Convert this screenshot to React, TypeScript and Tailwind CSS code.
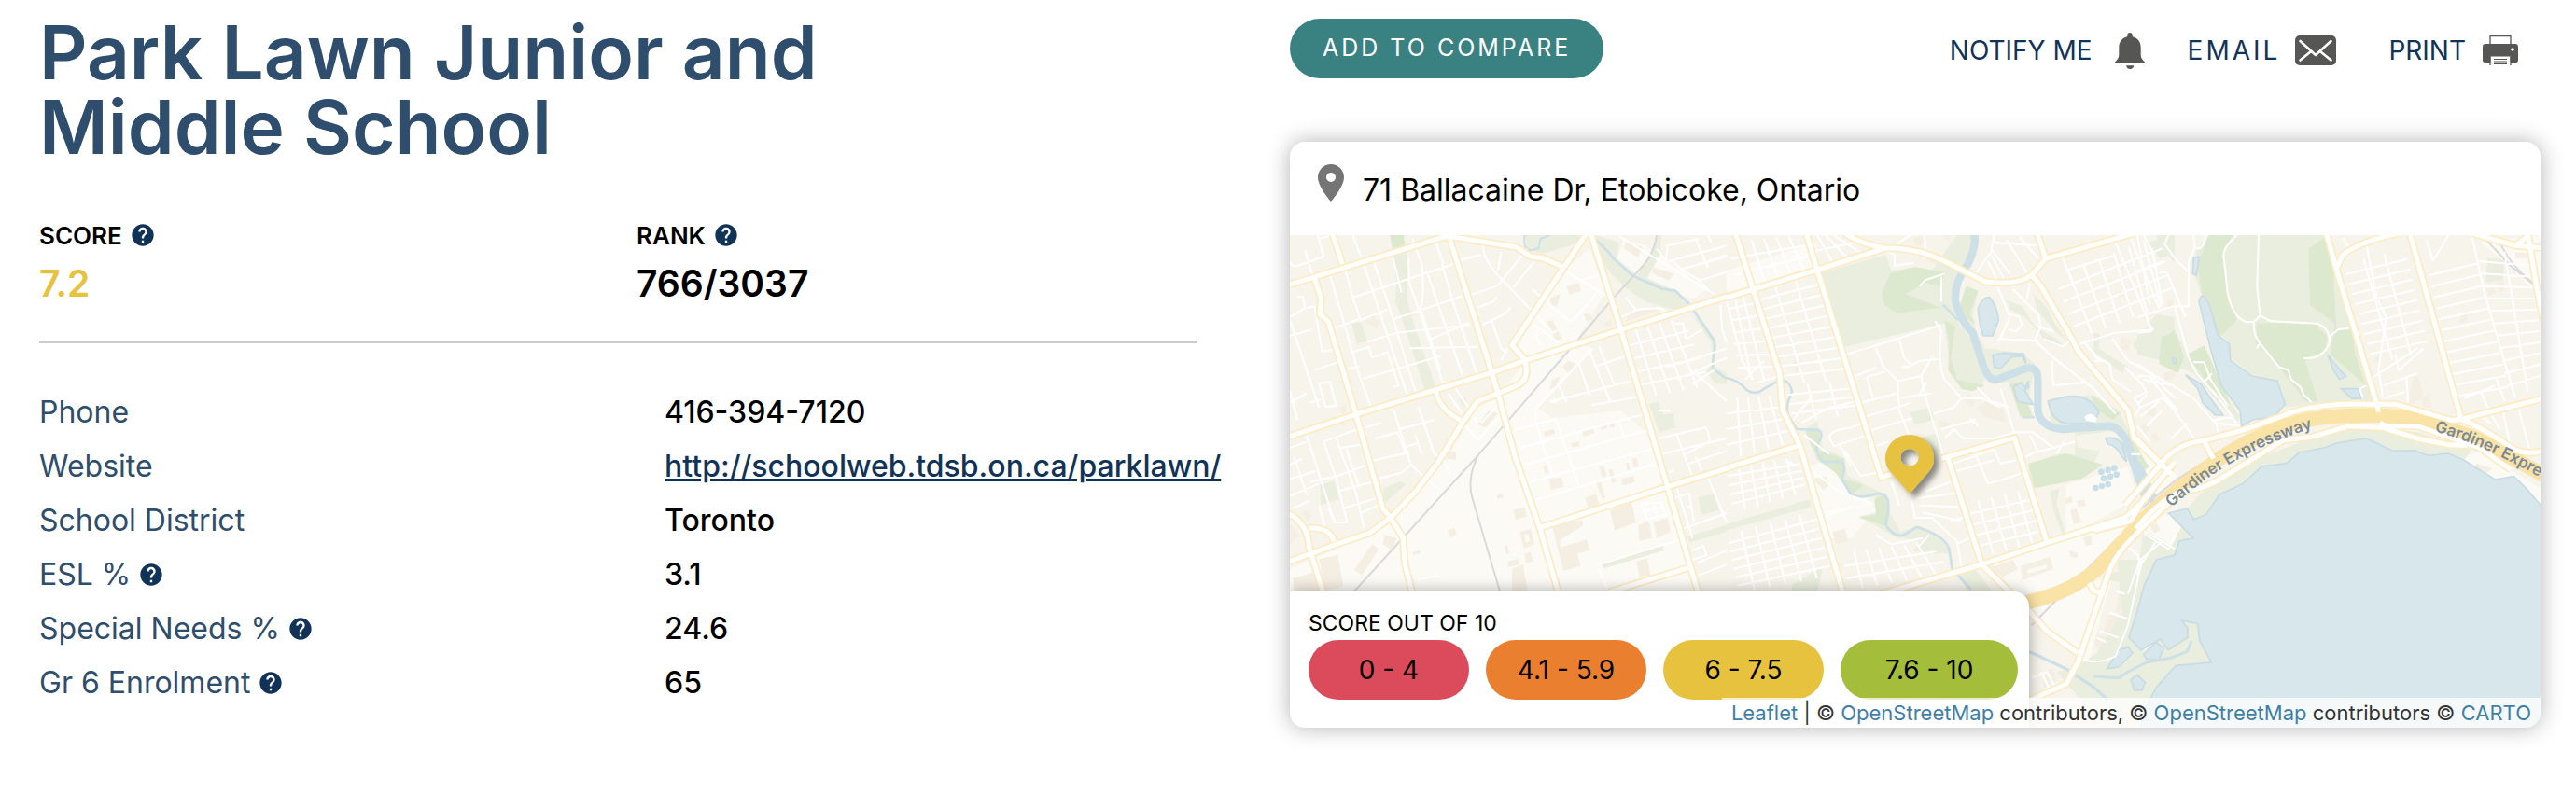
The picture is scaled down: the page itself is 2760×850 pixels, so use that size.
import type { ReactNode } from "react";
import { MdHelp, MdLocationOn } from "react-icons/md";

type Point = [number, number];

type Sheet = {
  origin: string;
  light: string[];
  park: string[];
  wood: string[];
  building: string[];
  water: string[];
  streams: { d: string; width: number }[];
  rail: string[];
  minor: string[];
  major: string[];
};

// Streets of a city block: n lines from a-b to d-c, m lines from a-d to b-c
function block(a: Point, b: Point, c: Point, d: Point, n: number, m: number) {
  const mix = (p: Point, q: Point, t: number) =>
    `${Math.round(p[0] + (q[0] - p[0]) * t)},${Math.round(p[1] + (q[1] - p[1]) * t)}`;
  let path = "";
  for (let i = 1; i <= n; i++) path += `M${mix(a, b, i / (n + 1))} L${mix(d, c, i / (n + 1))}`;
  for (let i = 1; i <= m; i++) path += `M${mix(a, d, i / (m + 1))} L${mix(b, c, i / (m + 1))}`;
  return path;
}

const west: Sheet = {
  origin: "translate(-36 -36)",
  light: [
    "M36,1110 L290,1000 L360,950 L530,770 L640,590 L700,560 L790,450 L960,385 L1010,400 L830,590 L880,625 L1100,600 L1180,670 L1250,850 L1360,1200 L36,1200Z",
    "M920,150 L1000,80 L1050,220 L960,370 L800,430 L770,390Z",
    "M1110,50 L1180,70 L1380,210 L1330,240 L1230,210 L1150,160 L1090,110Z",
  ],
  park: [
    "M358,36 L402,36 L415,120 L412,240 L440,340 L505,525 L470,535 L395,300 L375,250 L378,180Z",
    "M790,36 L985,36 L940,70 L850,95 L800,85Z",
    "M1020,36 L1095,60 L1085,115 L1150,165 L1190,110 L1215,36 L1230,36 L1225,100 L1185,175 L1275,215 L1325,275 L1270,275 L1180,250 L1120,210 L1060,150 L1035,110Z",
    "M1325,285 L1375,335 L1405,390 L1402,460 L1440,480 L1440,515 L1400,510 L1375,475 L1395,440 L1390,380Z",
    "M235,322 L265,315 L283,375 L252,388Z",
    "M133,838 L180,828 L193,885 L137,903Z",
    "M340,850 L390,828 L408,838 L345,893 L330,880Z",
    "M1190,580 L1220,572 L1235,612 L1270,610 L1275,655 L1225,670Z",
    "M1348,880 L1400,866 L1415,920 L1360,935Z",
    "M1315,1005 L1440,968 L1440,990 L1322,1024Z",
    "M1035,1090 L1235,1033 L1238,1050 L1045,1108Z",
  ],
  wood: ["M358,36 L402,36 L405,72 L366,76Z"],
  building: [
    "M1115,55 L1170,75 L1155,108 L1110,80Z",
    "M1205,140 L1270,160 L1255,182 L1200,158Z",
    "M925,200 L965,190 L972,215 L935,228Z",
    "M880,975 L975,950 L980,970 L905,1015 L905,1040 L990,1015 L1000,1050 L960,1060 L970,1100 L915,1115Z",
    "M1065,920 L1135,895 L1148,960 L1080,985Z",
    "M1100,820 L1140,810 L1145,830 L1105,842Z",
    "M985,880 L1020,868 L1032,905 L995,915Z",
    "M755,920 L790,910 L798,940 L762,952Z",
    "M700,872 L720,867 L723,880 L704,884Z",
    "M543,985 L565,977 L573,1000 L550,1008Z",
    "M300,1030 L322,1045 L268,1130 L243,1112Z",
    "M340,1000 L380,1010 L365,1050 L335,1030Z",
    "M130,1078 L190,1065 L208,1165 L150,1180Z",
    "M45,1140 L115,1120 L130,1180 L50,1180Z",
    "M36,965 L65,1000 L36,1035Z",
    "M775,990 L810,980 L822,1030 L788,1045Z M788,1000 L795,1025 L808,1020 L802,996Z",
    "M735,1085 L770,1078 L775,1095 L740,1104Z M790,1060 L810,1055 L818,1085 L795,1090Z",
    "M750,1110 L785,1095 L800,1180 L750,1180Z",
    "M725,1035 L735,1032 L742,1058 L732,1062Z",
    "M870,820 L910,815 L915,845 L875,855Z",
    "M1205,960 L1250,945 L1260,990 L1215,1010Z",
    "M1155,970 L1190,955 L1200,1010 L1160,1020Z",
    "M1150,1085 L1185,1075 L1195,1130 L1160,1135Z",
    "M975,665 L1010,655 L1015,672 L980,685Z M1035,650 L1055,645 L1057,658 L1038,662Z M1065,640 L1078,638 L1080,652 L1067,655Z",
    "M940,705 L965,700 L968,715 L944,718Z M850,668 L885,660 L888,675 L855,685Z",
    "M850,780 L862,776 L868,800 L856,803Z M1030,780 L1045,776 L1055,810 L1040,815Z",
    "M1060,790 L1072,788 L1085,830 L1072,834Z M1020,830 L1035,828 L1050,880 L1040,885Z",
    "M1115,770 L1125,768 L1130,790 L1120,792Z M1135,755 L1150,752 L1158,780 L1142,784Z",
    "M930,440 L955,450 L930,480 L912,460Z M880,500 L905,490 L890,525 L870,530Z",
    "M675,600 L705,610 L665,655 L640,645Z M580,565 L600,555 L610,580 L590,595Z",
    "M545,730 L570,735 L570,760 L540,755Z M430,1055 L455,1048 L455,1060 L433,1065Z",
    "M280,308 L298,310 L296,295 L308,293 L312,308 L330,312 L318,322 L320,338 L306,328 L285,322Z",
    "M195,590 L215,582 L218,605 L205,612Z M75,930 L98,920 L108,940 L92,955Z",
    "M860,315 L880,310 L895,340 L880,345Z M880,355 L900,345 L910,370 L890,375Z M1045,318 L1070,308 L1072,325 L1052,332Z",
    "M980,290 L1000,285 L1008,305 L990,312Z M870,240 L905,225 L895,265 L878,262Z",
    "M1120,290 L1210,262 L1220,280 L1118,312Z",
  ],
  water: [],
  streams: [
    { d: "M790,36 Q785,85 812,85 L835,78 L842,48 L870,36", width: 6 },
    { d: "M1020,52 L1060,90 L1075,110 L1140,168 L1230,208 L1275,215 L1320,258 L1400,375 Q1405,400 1397,420 L1395,465 L1440,498", width: 8 },
  ],
  rail: [
    "M240,1185 L640,745 L960,375 L1065,250 L1175,130 Q1210,85 1215,36",
    "M640,745 Q605,820 622,880 L712,1185",
  ],
  minor: [
    "M125,36 L145,105 L60,135 Q40,138 36,120 M85,85 L110,170 M130,48 L165,38",
    "M165,165 L260,490 L295,585 M215,150 L240,240 L262,305 M262,305 L180,335",
    "M238,36 L270,120 L420,570 M305,120 L360,280 L440,540 M365,100 L395,220",
    "M418,110 L420,190 L470,330 L530,520 M430,48 L460,130 Q470,240 455,270 L465,300 L520,470",
    "M475,150 L595,500 M525,130 L560,250 L640,490 M505,60 L530,130",
    "M240,236 L565,128 M370,306 L590,232 M260,310 L350,275 M285,380 L380,350 M240,412 L290,395 L300,430 L350,412 L385,520 L368,525",
    "M270,498 L520,425 M380,350 L615,325 M420,400 L640,395 M490,370 L610,318 M225,465 L260,458",
    "M60,235 L78,235 L85,270 L36,300 M90,270 L115,265 L140,410 L175,405 M36,360 L105,340 M36,310 L60,380 L130,590 M115,470 L190,445",
    "M130,512 L165,508 L185,585 L150,588 L130,512 M36,535 L60,630 M36,575 L90,545 M100,575 L135,565",
    "M655,60 Q655,120 720,180 L880,350 M570,120 L650,100 M600,235 L700,200 L720,180 L800,80 M635,270 L690,250 L700,235 M655,325 L725,290 L745,270 M755,205 L825,115 M715,90 L705,150",
    "M685,310 L715,400 L735,415 M735,400 L715,440 M815,210 L930,310 Q945,315 955,300 L1020,225 M920,150 L1060,235 M975,180 L1030,165 M815,320 L905,385 M835,340 Q820,380 850,390",
    "M1095,40 L1400,225 M1255,120 L1440,70 M1215,80 L1245,115 L1250,70 L1350,48 M1280,150 L1440,105 M1345,185 L1440,155 M1380,36 L1390,60 M1265,120 L1300,150 L1350,180 L1385,215",
    "M1380,120 L1440,100 M1340,48 L1380,140 M1100,300 L1155,275 L1220,270 L1250,282 M1115,235 L1150,280",
    block([1110, 350], [1300, 300], [1390, 520], [1170, 560], 4, 4),
    "M1440,400 L1250,460 M1440,430 L1280,500 M1340,480 L1440,570 M1330,515 L1400,470 M1270,320 L1300,320 L1310,370 L1360,340 M1420,260 L1425,340 L1440,380",
    "M1010,400 L840,580 Q820,600 825,630 L880,810 M965,450 L1000,550 M1000,410 L1065,570 M1030,395 L1080,520 M880,570 L1150,500 M1005,583 L1165,555 M1015,460 L1130,420 M870,570 L890,575 L885,560",
    "M760,662 L890,628 L965,840 M775,720 L1180,610 M790,775 L1195,660 M805,830 L1205,722 M825,888 L1220,770 M1090,630 L1110,680 M900,520 L925,570",
    "M1220,690 L1370,655 Q1380,655 1385,700 L1300,745 M1230,740 L1440,690 M1255,800 L1270,790 M1280,680 L1310,760 L1330,810 M1320,770 L1440,730 M1340,750 L1360,790 M1220,600 L1260,600",
    "M1165,900 L1230,895 L1245,935 L1185,950 L1165,900 M1205,900 L1218,945 M1170,925 L1240,910 M1275,880 L1320,865 L1335,960 M1280,850 L1330,1010 M1300,980 L1440,930 M1380,815 L1440,960 M1310,910 L1330,910",
    "M1330,1050 L1365,1035 L1375,1065 L1330,1080 M1345,1090 L1440,1050 M1350,1130 L1440,1095 M1030,1110 L1060,1180 M1030,1095 L1290,1015",
    "M36,720 L90,700 M90,680 L180,960 M145,700 L240,665 L330,640 M145,700 L185,820 L220,960 M185,690 L250,870 L275,980 M200,720 L265,710 M215,715 L260,850",
    "M36,775 L75,755 M36,820 L120,795 M100,830 L190,810 L300,770 M36,875 L130,835 M190,860 L300,830 M205,915 L320,880 M45,915 L100,890 M50,750 L90,870 M130,905 L150,980",
    "M285,765 L420,735 M295,825 L395,800 L425,775 L370,600 M425,775 L505,845 M310,690 L385,670 M390,660 L500,630 M385,675 L405,730 M440,680 L460,740 M400,720 L445,705 M450,590 L500,740 L535,765 M270,660 L280,690",
    "M545,545 L590,610 M570,530 L610,590 M610,600 L640,640 M600,650 L640,695 L710,620 M650,640 L700,590 M530,760 L550,800 M265,930 L330,900 M160,915 L180,960 L220,960 M445,1145 L515,1130",
  ],
  major: [
    "M36,195 L520,45 L548,40 L765,75 L810,105 L850,110 L912,138",
    "M172,30 L205,130",
    "M115,175 L137,240 L132,290 L160,315 L245,600 L335,915 L360,945 L400,1010 L405,1090 L430,1190",
    "M30,685 L250,612 L685,478 L790,440 L1100,340 L1445,232",
    "M548,42 L685,478 L705,545 L760,750 L840,980 L900,1190",
    "M990,30 L750,390 L790,435 Q810,500 765,520 L705,545 L640,570 L590,640 L510,770 L440,860 L360,945 L290,995 L200,1025 L30,1087",
    "M1003,30 L1100,340 L1250,845 L1320,1090 L1350,1190",
    "M845,975 L1250,845 L1445,785",
    "M505,540 Q515,580 550,610 L585,632",
    "M30,930 Q95,965 98,1040 L145,1190",
    "M98,978 Q165,975 178,1022",
    "M1060,1185 L1325,1103",
  ],
};

const middle: Sheet = {
  origin: "translate(1404 -36)",
  light: [
    "M240,780 L350,760 L480,920 L400,1010 L330,1010Z",
    "M1090,840 L1290,780 L1320,880 L1180,960 L1090,1000Z",
    "M850,1090 L1290,960 L1180,1130 L960,1190 L960,1230Z",
    "M972,1240 L1100,1175 L1240,1130 L1160,1420 L1110,1380Z",
    "M0,150 L290,60 L290,140 L0,220Z",
  ],
  park: [
    "M300,158 L510,100 L530,150 L600,140 L660,150 L740,36 L800,36 L780,120 L740,170 L720,250 L740,310 L790,380 L830,500 L820,525 L760,530 L720,480 L700,320 L380,395Z",
    "M770,200 L810,215 L790,290 L800,340 L830,400 L950,415 L990,450 L980,510 L960,625 L940,610 L905,510 L860,510 L820,420 L780,340 L745,290Z",
    "M250,660 L290,635 L310,720 L375,750 L390,810 L500,865 L525,930 L560,990 L620,970 L690,1010 L720,1060 L650,1060 L600,1050 L620,1020 L540,1005 L425,940 L480,930 L480,880 L400,880 L360,800 L290,760Z",
    "M1040,560 L1180,550 L1260,600 L1290,660 L1330,770 L1290,750 L1250,665 L1120,680 L1130,720 L1200,730 L1180,770 L980,850 L970,775 L1060,740 L1120,740 L1120,670 L1040,640Z",
    "M0,965 L270,885 L272,910 L0,985Z",
    "M590,605 L655,590 L668,630 L605,645Z",
    "M610,690 L680,672 L690,730 L640,740Z",
    "M1305,390 L1380,290 L1440,300 L1440,420 L1340,425Z",
    "M900,245 L950,265 L990,330 L1060,370 L1090,400 L1030,380 L960,300 L910,275Z",
    "M985,225 L1030,270 L1060,330 L1100,380 L1060,350 L1000,280Z",
    "M1180,350 L1200,355 L1195,400 L1290,460 L1270,480 L1180,410Z",
    "M1060,900 L1090,1000 L1080,1000 L1050,920 L1040,860 L1070,850Z",
    "M210,1160 L310,1100 L290,1190 L210,1190Z",
    "M1380,36 L1440,36 L1440,125 L1400,80Z",
    "M740,1120 L800,1110 L850,1180 L780,1190Z",
    "M1340,980 L1440,1040 L1440,1070 L1370,1080 L1330,1190 L1300,1190 L1330,1060Z",
    "M1220,1120 L1310,1120 L1300,1160 L1225,1145Z",
    "M1255,1080 L1440,1080 L1380,1180 L1345,1260 L1318,1330 L1300,1400 L1230,1480 L1130,1420 L1190,1380 L1270,1250Z",
  ],
  wood: [
    "M525,160 L605,138 L700,155 L690,200 L640,190 L575,225 L690,270 L600,280 L550,288 L505,260 L500,220Z",
    "M700,310 L735,330 L720,430 L740,500 L830,520 L790,538 L755,530 L712,470 L715,380Z",
    "M770,200 L808,215 L780,290 L800,320 L760,300 L750,260Z",
    "M970,770 L1090,738 L1210,775 L1140,820 L990,850Z",
    "M1170,550 L1265,610 L1240,630 L1195,600Z M1290,660 L1350,770 L1330,785 L1290,700Z",
    "M475,885 L510,865 L525,930 L510,970 L425,945 L480,935Z M255,665 L300,660 L290,740 L270,710Z",
    "M300,730 L380,755 L375,820 L440,840 L400,870 L350,800 L295,760Z",
    "M910,515 L940,510 L985,620 L945,620Z",
    "M1395,380 L1440,340 L1440,475 L1390,450Z",
  ],
  building: [
    "M215,440 L245,435 L235,480 L218,475Z M160,425 L175,430 L170,455 L158,450Z",
    "M275,820 L320,812 L330,840 L310,855Z M340,990 L380,980 L390,1020 L350,1030Z",
    "M600,50 L625,36 L635,60 L610,75Z M640,95 L670,100 L680,130 L645,120Z M690,36 L720,36 L715,60Z",
    "M420,218 L438,220 L438,230 L420,230Z M800,590 L850,560 L890,600 L900,640 L830,620Z",
    "M680,630 L720,640 L710,660 L680,650Z M780,545 L800,570 L790,590 L760,560Z",
    "M850,1105 L920,1080 L935,1110 L870,1145Z",
    "M945,1100 L1040,1070 L1050,1110 L950,1145Z M965,1112 L970,1125 L1030,1108 L1028,1095Z",
    "M1145,1010 L1170,1000 L1175,1030 L1155,1035Z M1100,1050 L1130,1060 L1125,1075 L1105,1070Z",
    "M1085,885 L1110,875 L1112,895 L1090,900Z M1125,890 L1150,885 L1155,905 L1130,910Z M1105,920 L1125,915 L1140,960 L1115,965Z",
    "M1260,210 L1275,230 L1262,240Z M1330,650 L1350,640 L1360,665 L1340,675Z M1360,680 L1380,670 L1395,695 L1375,700Z",
    "M1265,365 L1300,375 L1290,410 L1265,400Z M1350,595 L1380,590 L1375,620 L1355,615Z",
    "M1260,1190 L1300,1180 L1300,1230 L1250,1250Z M1225,1260 L1270,1250 L1250,1330 L1210,1320Z M1190,1320 L1230,1330 L1215,1370 L1180,1360Z",
    "M1010,1440 L1050,1430 L1060,1470 L1020,1490Z",
  ],
  water: [
    "M808,270 Q825,232 845,236 Q870,265 874,310 L855,360 L825,360 Q812,330 808,270Z",
    "M855,422 L890,415 L955,418 L962,448 L950,425 L915,428 L880,465 L860,460Z",
    "M922,525 L945,510 L960,525 L970,505 L970,525 L958,535 L985,580 L950,575 L935,570Z",
    "M1033,570 L1080,558 Q1160,540 1197,605 L1180,640 L1100,642 Q1045,640 1033,570Z",
    "M1218,690 Q1245,680 1270,705 L1285,765 L1268,745 Q1250,710 1225,708Z",
  ],
  streams: [
    { d: "M0,495 Q40,505 60,530 Q90,555 120,530 L160,508 Q200,490 210,540 Q185,590 200,620 L225,660 L290,662 Q310,665 302,690 Q275,730 310,765 L370,765 Q385,780 370,820 L400,870 Q430,885 480,868 Q520,860 520,910 L512,970 Q540,1010 570,1000 L610,975 Q700,1000 715,1045 L725,1110 L785,1175", width: 8 },
    { d: "M795,30 Q805,70 775,130 Q730,190 735,250 Q750,310 790,350 L820,440 Q840,510 870,500 L960,465 Q1000,455 1000,500 L1000,600 Q1010,655 1080,660 L1230,650 Q1280,660 1300,740 L1345,870", width: 25 },
    { d: "M695,260 L745,310 M950,622 L990,622 M1275,700 L1285,760", width: 7 },
    { d: "M1300,740 L1345,870 L1375,885", width: 30 },
    { d: "M972,1375 L1090,1430 L1180,1490 L1225,1530", width: 10 },
    { d: "M1180,1455 L1260,1460 L1290,1440 L1350,1410 L1430,1395 L1480,1375 L1495,1340", width: 9 },
  ],
  rail: ["M1440,840 L1370,895 L1130,1140 L980,1290"],
  minor: [
    block([0, 60], [240, 36], [290, 135], [40, 215], 5, 2),
    block([265, 36], [370, 36], [480, 80], [295, 140], 3, 1),
    block([90, 215], [285, 160], [390, 500], [180, 520], 2, 9),
    block([190, 520], [400, 500], [430, 610], [215, 640], 2, 3),
    block([0, 235], [75, 215], [160, 500], [40, 500], 2, 6),
    "M0,250 L50,440 L85,500 M60,500 L120,440 M100,510 L165,490 M270,560 L230,610 L215,630 M240,640 L330,590 L420,570",
    block([0, 560], [170, 550], [225, 700], [0, 760], 4, 3),
    "M330,690 Q325,665 400,655 L440,640 M330,690 L345,715 L450,680 M250,680 L330,740 M380,730 L430,810 L480,800 M360,705 L400,780",
    "M390,418 L690,325 M670,312 L690,345 Q680,420 690,470 L700,500 L755,560 L820,560 L880,590 M410,490 L480,462 M480,400 L505,460 L550,505 L625,490 L660,430 M555,372 L570,430 L595,455",
    "M450,492 L510,475 M450,492 L470,560 M550,505 L555,600 L590,690 L600,730 M560,560 L620,550 L640,510 M430,575 L545,545 M625,490 L640,560 L695,740 M445,620 L595,575 M665,610 L730,590 L755,560 M620,550 L660,545",
    "M460,665 L595,625 M475,715 L520,700 M560,460 L585,460 L620,440 L680,435 M690,660 L800,630 M700,690 L730,660 L760,690 L860,690 L925,670 L985,670 L1050,720 L1120,700 M780,625 L810,650",
    "M880,530 L930,690 M960,750 L990,735 L1050,720 M975,680 L1000,730 M1060,740 L1085,700 M730,770 L860,725 M740,795 L860,760 M800,740 L840,835 L910,815 L950,800 M860,725 L880,770 L930,760",
    block([765, 900], [980, 850], [1025, 1020], [815, 1070], 4, 4),
    block([600, 860], [730, 820], [760, 1000], [640, 950], 0, 3),
    "M530,830 L555,905 M595,890 L605,945 L660,945 L740,1020 L755,1100 M740,1030 L780,1010 M615,1040 L650,1000 M720,955 L760,945 M640,860 L720,830",
    block([0, 780], [230, 750], [260, 860], [20, 930], 5, 4),
    "M195,765 L212,770 L200,778 M270,790 L360,860 L470,900 M290,950 L400,910 M300,930 L420,910 M480,1000 L530,1030 L630,1010",
    block([0, 1000], [280, 920], [340, 1130], [40, 1190], 5, 6),
    block([370, 1060], [650, 1020], [720, 1120], [390, 1180], 6, 2),
    "M500,80 L540,100 L540,135 L600,125 M540,70 L590,36 M635,36 L640,80 M620,200 L640,180 L700,160 M690,170 L690,250 M800,160 L850,90 L860,36",
    "M850,80 L910,160 M900,50 L960,150 L975,165 M860,60 L1000,70 M940,40 L1000,110 M850,100 L890,175 M840,120 L870,180",
    "M975,190 L965,240 M870,200 L890,250 L910,300 L880,370 L990,375 L1010,330 L1000,290 L920,210 M910,290 L940,300 L950,325 L930,345 L905,340 M990,375 L1050,430 L1180,530 L1250,610 M1045,440 L1050,520 L1150,510",
    "M1000,330 L1050,345 M1020,370 L1080,395 L1110,370 M870,380 L890,345 M805,525 L850,570 L910,590 M1150,380 L1190,430 L1230,450 L1240,500 L1300,540",
    block([1050, 170], [1390, 36], [1440, 250], [1130, 370], 6, 4),
    "M1080,110 L1120,210 M1090,150 L1250,100 M1250,60 L1350,300 M1300,50 L1390,270 M1120,390 L1250,350 L1370,340 L1350,310",
    "M1240,370 L1290,440 L1360,480 L1440,560 M1280,460 L1330,510 L1350,540 L1310,560 L1330,590 L1310,620 M1340,500 L1440,520 M1180,440 L1220,440 M1330,590 L1400,560 L1440,600 M1330,740 L1300,740",
    "M1290,1040 Q1330,1060 1325,1090 L1290,1190 M1330,1080 L1400,1020 M1330,980 L1440,1045",
    "M1335,1080 L1320,1150 L1290,1290 L1250,1390 Q1190,1420 1150,1400 M1230,1250 L1290,1270 M1200,1310 L1260,1330 M1190,1330 L1220,1345 M1250,1180 L1280,1190",
    "M980,1460 L1030,1440 L1060,1500 M1010,1440 L1040,1500",
  ],
  major: [
    "M-5,238 L300,145 L510,78 Q610,75 700,120 L830,185 Q930,200 980,165 L1025,112 L1310,30",
    "M-5,786 L235,712",
    "M28,30 L85,210 L170,480 L180,600 L235,712 L375,1190",
    "M256,30 L290,145 L497,815 L530,805",
    "M380,30 Q430,65 510,78",
    "M998,30 L1025,110",
    "M980,165 L1010,200 L1110,370 L1130,410 L1290,600 L1310,690 L1430,805",
    "M690,755 L925,688 L1030,1025",
    "M712,755 L820,1095",
    "M480,1195 L820,1095 L1030,1025 L1280,945 L1330,900 L1440,765",
    "M1180,985 L1300,955 L1330,900",
    "M820,1095 L972,1245 L1030,1310 L1129,1380",
    "M1440,880 Q1340,970 1280,1035 Q1240,1080 1225,1130 L1129,1410 L1091,1480 L977,1530",
    "M1165,1155 L1180,1180 L1215,1190",
  ],
};

const east: Sheet = {
  origin: "translate(2724 -36)",
  light: [
    "M1100,60 L1310,36 L1310,200 L1270,210 L1180,120Z",
    "M1040,755 L1100,730 L1296,850 L1296,905 L1250,850 L1210,812 L1150,822Z",
    "M20,980 L100,930 L180,1000 L100,1040Z",
    "M0,700 L130,810 L60,870 L30,800Z",
  ],
  park: [
    "M230,36 L610,36 L640,150 L690,330 L740,510 L765,570 L560,580 L470,590 L455,505 L370,490 L300,430 L295,380 L255,350 L200,210 L180,150 L190,85Z",
    "M130,950 L180,955 L220,935 L265,870 L340,835 L400,780 L480,770 L520,735 L600,720 L640,705 L700,695 L760,700 L820,730 L890,728 L935,745 L1000,738 L1050,760 L1075,725 L900,670 L680,655 L540,695 L400,750 L200,870Z",
    "M180,1005 L150,960 L100,1050 L60,1030 L10,1090 L0,1190 L60,1100 L120,1065 L135,1020Z",
    "M1125,110 L1180,115 L1175,180 L1120,188Z",
    "M0,350 L100,300 L150,400 L250,500 L330,620 L320,640 L240,550 L180,480 L80,440 L0,420Z",
    "M36,60 L90,40 L110,100 L70,110Z",
    "M-15,1240 L20,1375 L74,1335 L99,1370 L162,1330 L141,1275 L194,1285 L238,1410 L124,1420 L61,1490 L20,1600 L-120,1600 L-260,1440 L-150,1420Z",
  ],
  wood: [
    "M230,36 L310,36 L275,90 L290,220 L320,310 L260,370 L205,215 L195,130Z",
    "M550,80 L610,36 L630,160 L640,340 L690,340 L700,420 L735,520 L620,420 L635,320 L555,260Z",
    "M385,320 L560,315 L610,360 L605,410 L540,440 L580,570 L540,570 L455,460 L380,380Z",
    "M80,360 L125,355 L150,430 L130,480 L70,440Z M0,740 L40,780 L10,800Z",
    "M160,420 L215,390 L300,580 L230,520Z",
  ],
  building: [
    "M885,495 L905,490 L920,560 L870,585Z M915,560 L940,545 L945,590 L920,590Z",
    "M1040,295 L1058,290 L1062,315 L1035,320Z M1125,210 L1145,205 L1148,225 L1130,232Z",
    "M1155,185 L1175,180 L1182,215 L1165,220Z M1090,770 L1140,785 L1120,805 L1085,785Z",
    "M490,360 L520,350 L528,390 L500,395Z M760,430 L780,425 L782,440 L763,445Z",
    "M85,480 L125,470 L120,500 L90,505Z M95,250 L115,240 L118,265 L98,270Z",
    "M1215,90 L1255,95 L1255,110 L1215,110Z M40,970 L60,960 L75,985 L55,995Z M10,1040 L40,1035 L35,1065 L12,1070Z",
  ],
  water: [
    "M198,250 Q210,205 235,270 L260,360 L295,385 L300,440 L370,490 L450,505 L475,580 L440,620 L370,630 L335,650 L330,600 L270,520 L235,400Z",
    "M155,485 L205,515 L235,560 L275,615 L250,615 L210,575 L195,530Z",
    "M180,110 L200,105 L190,165 L178,160Z M115,430 L125,435 L122,450 L114,445Z",
    "M612,420 L635,450 L670,490 L650,500 L630,470Z M655,530 L710,530 L720,560 L690,562Z",
    "M100,930 L160,915 L182,950 L220,935 L265,870 L340,835 L400,780 L480,770 L520,735 L600,720 L640,705 L700,695 L735,690 L760,700 L820,730 L890,728 L935,745 L1000,738 L1050,760 L1150,822 L1210,812 L1250,850 L1310,920 L1310,1660 L0,1660 L25,1560 L61,1490 L124,1420 L238,1410 L200,1340 L194,1285 L141,1275 L162,1300 L162,1330 L99,1370 L74,1335 L11,1370 L-27,1330 L-2,1250 L23,1160 L61,1080 L120,1065 L135,1020 L180,1010Z",
    "M-97,1430 L-60,1370 L-30,1360 L-15,1380 L-60,1425Z M20,1385 L60,1345 L85,1365 L70,1400 L30,1400Z",
    "M-20,1465 L0,1450 L25,1475 L15,1500 L-10,1500Z",
  ],
  streams: [{ d: "M0,770 L50,880", width: 26 }],
  rail: [
    "M1120,50 L1200,135 L1285,205 M1160,45 Q1190,130 1285,200",
    "M-20,945 L60,875 L130,820 L240,750",
  ],
  minor: [
    block([660, 130], [860, 80], [940, 410], [760, 450], 2, 9),
    block([930, 130], [1090, 90], [1200, 560], [1030, 590], 0, 12),
    block([1090, 80], [1270, 100], [1310, 520], [1200, 560], 1, 11),
    "M660,45 L680,75 M735,60 L770,240 L800,300 L775,470 L790,560 M930,50 L950,120 M950,120 L1000,36 M1075,36 L1115,220 L1215,560 M830,420 L840,470 L920,400 M865,490 L870,575",
    "M755,495 L900,400 M790,520 L900,480 M795,560 L860,540 M1050,560 L1150,520 M1105,540 L1130,600 L1165,660 M1155,500 L1180,570 M1175,600 L1200,720 M1225,590 L1260,725 M1095,610 L1135,640",
    "M320,36 Q270,80 278,110 L290,220 Q305,300 350,315 L375,315 L395,295 L385,200 L390,36 M395,295 L430,313 L580,320 Q620,340 618,380 Q600,435 535,432 M618,362 L645,340 L680,335 M375,315 Q370,350 395,385 L455,460 L485,470 L495,500 L525,525 L535,550 L560,572 M395,385 L383,400",
    "M20,36 L50,90 L80,260 M0,36 L40,260 M85,60 L120,110 L165,155 M0,150 L85,120 M100,36 L90,60 M180,36 L185,75 L165,120 L165,265 L115,265 L0,300 M220,36 Q215,80 190,80 M70,155 L95,155 L130,240 L155,300 M30,300 L45,345 L0,350",
    "M120,265 L165,430 L190,480 L265,565 L320,640 M0,450 L60,490 L180,560 L250,640 L330,650 M180,445 L215,445 L235,500 L290,585 M0,490 L40,490 L80,545 L190,700 M40,490 L60,520 L130,600 M260,670 L250,630 L310,620 M215,510 L240,480",
    "M0,580 L30,550 M10,620 L70,570 M30,650 L80,600 M0,650 L40,700 M110,690 L160,640 M0,1060 Q10,1080 10,1100 L60,1020 L100,1045 L125,1000 M20,995 L60,1020 M10,1085 L0,1130",
    "M715,530 L735,520 M715,530 L725,560",
  ],
  major: [
    "M608,30 L640,145 L770,580 L775,605",
    "M640,145 L660,100 Q720,55 840,30",
    "M876,30 L1040,625",
    "M1075,30 L1215,70 L1310,78",
    "M1215,70 L1255,40 M1255,30 L1285,210 L1305,310",
    "M-5,690 L110,805",
    "M215,700 L245,755",
    "M-40,905 L70,780 Q120,705 220,695 L350,660 L500,605 Q600,575 750,580 L830,580 L1010,632 L1040,628 L1310,560",
    "M1040,628 Q1110,655 1210,725 Q1260,745 1310,728",
    "M-5,980 Q60,900 130,865 L200,850 L250,830 L470,695 L560,685 L680,650 L790,655 L900,690 L1000,710 L1060,712",
    "M780,640 L800,650 L900,650 L1100,720 L1200,790",
  ],
};

const sheets = [west, middle, east];

const tanks: Point[] = [[1204, 797], [1226, 791], [1246, 785], [1212, 818], [1233, 812], [1253, 806], [1186, 849], [1206, 843], [1226, 837]];

const expressway =
  "M-400,1225 Q-230,1200 -130,1110 L20,950 L140,845 L270,750 Q430,650 560,628 Q700,608 850,620 Q960,640 1100,695 L1310,810";

function Layer({ draw }: { draw: (sheet: Sheet) => ReactNode }) {
  return (
    <>
      {sheets.map((sheet) => (
        <g key={sheet.origin} transform={sheet.origin}>
          {draw(sheet)}
        </g>
      ))}
    </>
  );
}

function StreetMap() {
  return (
    <svg
      viewBox="0 0 4020 1584"
      preserveAspectRatio="xMidYMid slice"
      className="block h-[528px] w-full"
      role="img"
      aria-label="Map of the area around the school"
    >
      <defs>
        <path id="label-west" d="M110,912 Q310,725 604,645" />
        <path id="label-east" d="M955,667 Q1120,709 1360,854" />
        <filter id="pin-shadow" x="-50%" y="-50%" width="200%" height="200%">
          <feDropShadow dx="16" dy="14" stdDeviation="9" floodColor="#000" floodOpacity="0.45" />
        </filter>
      </defs>
      <rect width="4020" height="1584" fill="#f7f4ec" />
      <Layer draw={(s) => <path d={s.light.join("")} fill="#fbfaf5" />} />
      <Layer draw={(s) => <path d={s.building.join("")} fill="#f5eee3" fillRule="evenodd" />} />
      <Layer draw={(s) => <path d={s.park.join("")} fill="#e9eede" />} />
      <Layer draw={(s) => <path d={s.wood.join("")} fill="#dde9cf" />} />
      <Layer draw={(s) => <path d={s.water.join("")} fill="#d8e7eb" stroke="#c8dce4" strokeWidth="5" />} />
      <Layer
        draw={(s) =>
          s.streams.map((stream) => (
            <path key={stream.d} d={stream.d} fill="none" stroke="#cde0e8" strokeWidth={stream.width} strokeLinejoin="round" />
          ))
        }
      />
      <Layer draw={(s) => <path d={s.rail.join("")} fill="none" stroke="#dadada" strokeWidth="6" />} />
      <Layer draw={(s) => <path d={s.minor.join("")} fill="none" stroke="#fff" strokeWidth="6" strokeLinejoin="round" />} />
      <Layer draw={(s) => <path d={s.major.join("")} fill="none" stroke="#fdebc2" strokeWidth="25" strokeLinejoin="round" />} />
      <g transform={east.origin}>
        <path d={expressway} fill="none" stroke="#fae3a6" strokeWidth="46" />
      </g>
      <Layer draw={(s) => <path d={s.major.join("")} fill="none" stroke="#fff" strokeWidth="15" strokeLinejoin="round" />} />
      <g transform={middle.origin} fill="#c9dfe8">
        {tanks.map(([x, y]) => (
          <circle key={`${x}-${y}`} cx={x} cy={y} r="10" />
        ))}
        <path d="M1150,620 Q1170,600 1190,625 L1185,638 L1155,632Z" fill="#fff" />
      </g>
      <g transform={east.origin} fill="#7b8a97" className="font-[Inter,sans-serif] text-[51px] font-semibold">
        <text>
          <textPath href="#label-west">Gardiner Expressway</textPath>
        </text>
        <text>
          <textPath href="#label-east">Gardiner Expressway</textPath>
        </text>
      </g>
      <g transform={middle.origin}>
        <path
          d="M588,678 C545,678 510,711 510,754 C510,779 520,791 535,807 L588,868 L641,807 C656,791 666,779 666,754 C666,711 631,678 588,678Z M588,723 a29,28 0 1 1 0,56 a29,28 0 1 1 0,-56Z"
          fill="#e6c23f"
          fillRule="evenodd"
          filter="url(#pin-shadow)"
        />
      </g>
    </svg>
  );
}

function BellIcon() {
  return (
    <svg viewBox="0 0 32 39" className="h-[39px] w-8" fill="#565654" aria-hidden="true">
      <path d="M16 0c-1.700 0-2.800 1.300-2.800 3v1.200C7.500 5.500 4.300 10 4.300 16v7.500c0 3-1.200 5.300-4.300 8V33h32v-1.500c-3.100-2.700-4.300-5-4.300-8V16c0-6-3.200-10.500-8.900-11.800V3c0-1.700-1.100-3-2.800-3z" />
      <path d="M12 35.300h8.400c-.4 2.300-2 3.700-4.200 3.700s-3.800-1.400-4.200-3.700z" />
    </svg>
  );
}

function MailIcon() {
  return (
    <svg viewBox="0 0 44 32" className="h-8 w-11" aria-hidden="true">
      <rect width="44" height="32" rx="5" fill="#565654" />
      <path d="M5.500 6L22 21 38.500 6M5.500 26.500l11-9M38.500 26.500l-11-9" fill="none" stroke="#fff" strokeWidth="2.600" strokeLinecap="round" strokeLinejoin="round" />
    </svg>
  );
}

function PrinterIcon() {
  return (
    <svg viewBox="0 0 38 32" className="h-8 w-[38px]" aria-hidden="true">
      <path d="M8 10V.7h22V10" fill="#fff" stroke="#565654" strokeWidth="1.300" />
      <path d="M3 9h32c1.800 0 3 1.200 3 3v14.500c0 1.500-.8 2.500-2.300 2.500H2.300C.8 29 0 28 0 26.500V12c0-1.800 1.200-3 3-3z" fill="#565654" />
      <circle cx="32" cy="15" r="1.800" fill="#fff" />
      <path d="M8.500 22.500h21V32h-21z" fill="#fff" />
      <path d="M8 23v9M30 23v9" stroke="#565654" strokeWidth="1.300" />
      <path d="M12 25.500h14M12 28h14M12 30.500h14" stroke="#565654" strokeWidth="1.200" />
    </svg>
  );
}

function Help({ topic }: { topic: string }) {
  return (
    <button type="button" aria-label={`About ${topic}`} className="cursor-pointer text-[#123358]">
      <MdHelp size={28} />
    </button>
  );
}

const details = [
  { label: "Phone", value: "416-394-7120" },
  { label: "Website", value: "http://schoolweb.tdsb.on.ca/parklawn/", link: true },
  { label: "School District", value: "Toronto" },
  { label: "ESL %", value: "3.1", help: true },
  { label: "Special Needs %", value: "24.6", help: true },
  { label: "Gr 6 Enrolment", value: "65", help: true },
];

const bands = [
  { label: "0 - 4", style: "w-[172px] bg-[#db4b5c]" },
  { label: "4.1 - 5.9", style: "w-[172px] bg-[#ea7f30]" },
  { label: "6 - 7.5", style: "w-[172px] bg-[#e6c23f]" },
  { label: "7.6 - 10", style: "w-[190px] bg-[#a4bd3b]" },
];

function SchoolInfo() {
  return (
    <section className="pt-4">
      <h1 className="max-w-[1000px] text-[80px] leading-[80px] font-semibold text-[#2f4d6c]">
        Park Lawn Junior and Middle School
      </h1>

      <div className="mt-[60px] mr-[60px] grid grid-cols-2 font-semibold">
        <div>
          <h2 className="flex h-8 items-center gap-2 text-[26px]">
            SCORE <Help topic="score" />
          </h2>
          <p className="mt-3 text-[39px] leading-[48px] text-[#e6c23f]">7.2</p>
        </div>
        <div>
          <h2 className="flex h-8 items-center gap-2 text-[26px]">
            RANK <Help topic="rank" />
          </h2>
          <p className="mt-3 text-[39px] leading-[48px]">766/3037</p>
        </div>
      </div>

      <hr className="mt-[38px] mr-[100px] border-t-2 border-[#cbcbcb]" />

      <dl className="mt-[45px]">
        {details.map((row) => (
          <div key={row.label} className="grid h-[58px] grid-cols-2 items-center text-[32px]">
            <dt className="flex items-center gap-2 text-[#2f4d6c]">
              {row.label}
              {row.help && <Help topic={row.label} />}
            </dt>
            <dd className="font-medium whitespace-nowrap">
              {row.link ? (
                <a href={row.value} className="text-[#123358] underline">
                  {row.value}
                </a>
              ) : (
                row.value
              )}
            </dd>
          </div>
        ))}
      </dl>
    </section>
  );
}

function Toolbar() {
  return (
    <div className="flex items-center justify-between pr-6">
      <button type="button" className="h-16 cursor-pointer rounded-full bg-[#3a8281] px-[35px] text-[25px] tracking-[3px] text-white">
        ADD TO COMPARE
      </button>
      <div className="flex items-center pt-1 text-[28px] text-[#123358]">
        <a href="#notify" className="mr-[46px] flex items-center gap-6">
          NOTIFY ME <BellIcon />
        </a>
        <a href="#email" className="mr-[56px] flex items-center gap-4 tracking-[3px]">
          EMAIL <MailIcon />
        </a>
        <a href="#print" className="flex items-center gap-[18px]">
          PRINT <PrinterIcon />
        </a>
      </div>
    </div>
  );
}

function MapCard() {
  return (
    <div className="mt-[68px] overflow-hidden rounded-2xl bg-white shadow-[0_0_24px_rgba(0,0,0,0.3)]">
      <div className="flex h-[100px] items-center px-5 pt-1 text-[32px]">
        <MdLocationOn size={48} className="mb-4 text-[#757575]" />
        <span className="ml-[10px]">71 Ballacaine Dr, Etobicoke, Ontario</span>
      </div>

      <div className="relative">
        <StreetMap />

        <div className="absolute bottom-0 left-0 h-[146px] rounded-tr-2xl bg-white pt-[18px] pr-3 pl-5 shadow-[0_0_16px_rgba(0,0,0,0.35)]">
          <p className="text-[23px] leading-8">SCORE OUT OF 10</p>
          <ul className="mt-0.5 flex gap-[18px] text-[28px]">
            {bands.map((band) => (
              <li key={band.label} className={`flex h-16 items-center justify-center rounded-full ${band.style}`}>
                {band.label}
              </li>
            ))}
          </ul>
        </div>

        <div className="absolute right-0 bottom-0 bg-white/75 px-[10px] text-[22px] leading-8 whitespace-nowrap text-[#333]">
          <a href="#leaflet" className="text-[#3f7fa6]">Leaflet</a> | ©{" "}
          <a href="#osm" className="text-[#3f7fa6]">OpenStreetMap</a> contributors, ©{" "}
          <a href="#osm-copyright" className="text-[#3f7fa6]">OpenStreetMap</a> contributors ©{" "}
          <a href="#carto" className="text-[#3f7fa6]">CARTO</a>
        </div>
      </div>
    </div>
  );
}

export default function App() {
  return (
    <main className="grid grid-cols-2 bg-white pr-[38px] pb-[70px] pl-[42px] font-[Inter,sans-serif] text-black">
      <SchoolInfo />
      <section className="pt-5">
        <Toolbar />
        <MapCard />
      </section>
    </main>
  );
}
